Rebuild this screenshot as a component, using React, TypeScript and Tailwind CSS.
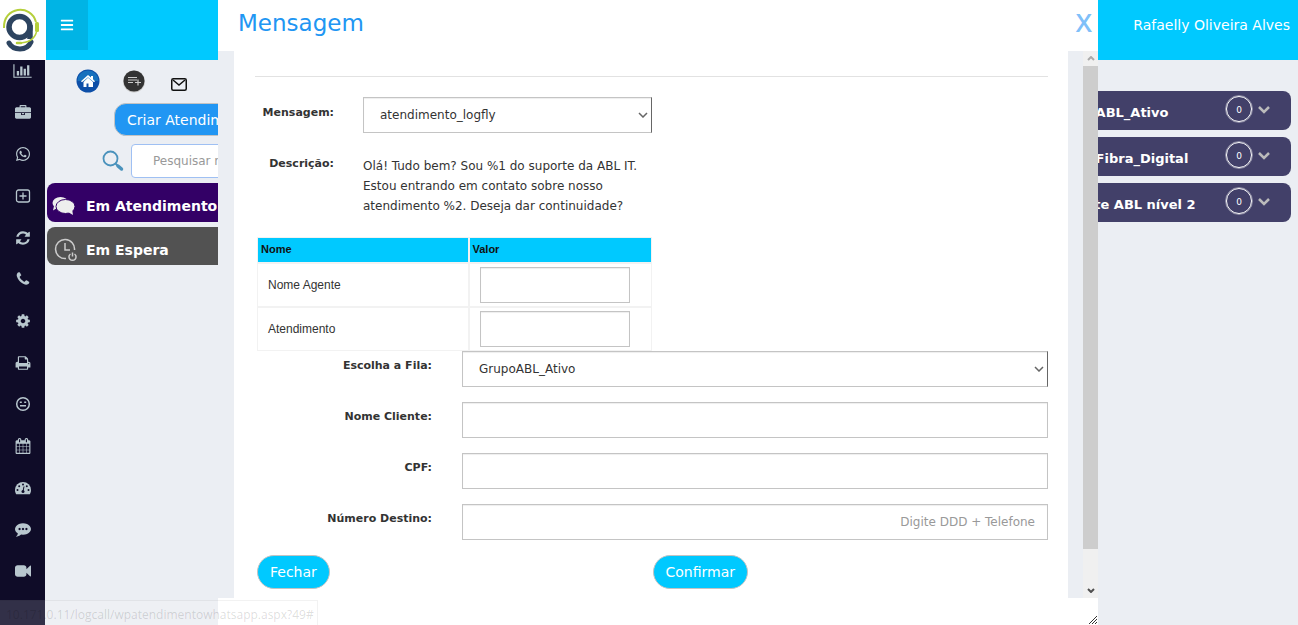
import type { ReactNode } from 'react';
import { FaBars, FaWhatsapp } from 'react-icons/fa';

const queues = ['GrupoABL_Ativo', 'GrupoFibra_Digital', 'Suporte ABL nível 2'];

const paths = {
  chart:
    'M640 896v512h-256v-512h256zm384-512v1024h-256v-1024h256zm1024 1152v128h-2048v-1536h128v1408h1920zm-640-896v768h-256v-768h256zm384-384v1152h-256v-1152h256z',
  briefcase:
    'M640 256h512v-128h-512v128zm1152 640v480q0 66-47 113t-113 47h-1472q-66 0-113-47t-47-113v-480h672v160q0 26 19 45t45 19h320q26 0 45-19t19-45v-160h672zm-768 0v128h-256v-128h256zm768-480v384h-1792v-384q0-66 47-113t113-47h352v-160q0-40 28-68t68-28h576q40 0 68 28t28 68v160h352q66 0 113 47t47 113z',
  refresh:
    'M1639 1056q0 5-1 7-64 268-268 434.5t-478 166.5q-146 0-282.5-55t-243.5-157l-129 129q-19 19-45 19t-45-19-19-45v-448q0-26 19-45t45-19h448q26 0 45 19t19 45-19 45l-137 137q71 66 161 102t187 36q134 0 250-65t186-179q11-17 53-117 8-23 30-23h192q13 0 22.5 9.5t9.5 22.5zm25-800v448q0 26-19 45t-45 19h-448q-26 0-45-19t-19-45 19-45l138-138q-148-137-349-137-134 0-250 65t-186 179q-11 17-53 117-8 23-30 23h-199q-13 0-22.5-9.5t-9.5-22.5v-7q65-268 270-434.5t480-166.5q146 0 284 55.5t245 156.5l130-129q19-19 45-19t45 19 19 45z',
  phone:
    'M1600 1240q0 27-10 70.5t-21 68.5q-21 50-122 106-94 51-186 51-27 0-53-3.5t-57.5-12.5-47-14.5-55.5-20.5-49-18q-98-35-175-83-127-79-264-216t-216-264q-48-77-83-175-3-9-18-49t-20.5-55.5-14.5-47-12.5-57.5-3.5-53q0-92 51-186 56-101 106-122 25-11 68.5-21t70.5-10q14 0 21 3 18 6 53 76 11 19 30 54t35 63.5 31 53.5q3 4 17.5 25t21.5 35.5 7 28.5q0 20-28.5 50t-62 55-62 53-28.5 46q0 9 5 22.5t8.5 20.5 14 24 11.5 19q76 137 174 235t235 174q2 1 19 11.5t24 14 20.5 8.5 22.5 5q18 0 46-28.5t53-62 55-62 50-28.5q14 0 28.5 7t35.5 21.5 25 17.5q25 15 53.5 31t63.5 35 54 30q70 35 76 53 3 7 3 21z',
  cog: 'M1152 896q0-106-75-181t-181-75-181 75-75 181 75 181 181 75 181-75 75-181zm512-109v222q0 12-8 23t-20 13l-185 28q-19 54-39 91 35 50 107 138 10 12 10 25t-9 23q-27 37-99 108t-94 71q-12 0-26-9l-138-108q-44 23-91 38-16 136-29 186-7 28-36 28h-222q-14 0-24.5-8.5t-11.5-21.5l-28-184q-49-16-90-37l-141 107q-10 9-25 9-14 0-25-11-126-114-165-168-7-10-7-23 0-12 8-23 15-21 51-66.5t54-70.5q-27-50-41-99l-183-27q-13-2-21-12.5t-8-23.5v-222q0-12 8-23t19-13l186-28q14-46 39-92-40-57-107-138-10-12-10-24 0-10 9-23 26-36 98.5-107.5t94.5-71.5q13 0 26 10l138 107q44-23 91-38 16-136 29-186 7-28 36-28h222q14 0 24.5 8.5t11.5 21.5l28 184q49 16 90 37l142-107q9-9 24-9 13 0 25 10 129 119 165 170 7 8 7 22 0 12-8 23-15 21-51 66.5t-54 70.5q26 50 41 98l183 28q13 2 21 12.5t8 23.5z',
  print:
    'M448 1536h896v-256h-896v256zm0-640h896v-384h-160q-40 0-68-28t-28-68v-160h-640v640zm1152 64q0-26-19-45t-45-19-45 19-19 45 19 45 45 19 45-19 19-45zm128 0v416q0 13-9.5 22.5t-22.5 9.5h-224v160q0 40-28 68t-68 28h-960q-40 0-68-28t-28-68v-160h-224q-13 0-22.5-9.5t-9.5-22.5v-416q0-79 56.5-135.5t135.5-56.5h64v-544q0-40 28-68t68-28h672q40 0 88 20t76 48l152 152q28 28 48 76t20 88v256h64q79 0 135.5 56.5t56.5 135.5z',
  calendar:
    'M192 1664h288v-288h-288v288zm352 0h320v-288h-320v288zm-352-352h288v-320h-288v320zm352 0h320v-320h-320v320zm-352-384h288v-288h-288v288zm736 736h320v-288h-320v288zm-384-736h320v-288h-320v288zm768 736h288v-288h-288v288zm-384-352h320v-320h-320v320zm-352-864v-288q0-13-9.5-22.5t-22.5-9.5h-64q-13 0-22.5 9.5t-9.5 22.5v288q0 13 9.5 22.5t22.5 9.5h64q13 0 22.5-9.5t9.5-22.5zm736 864h288v-320h-288v320zm-384-384h320v-288h-320v288zm384 0h288v-288h-288v288zm32-480v-288q0-13-9.5-22.5t-22.5-9.5h-64q-13 0-22.5 9.5t-9.5 22.5v288q0 13 9.5 22.5t22.5 9.5h64q13 0 22.5-9.5t9.5-22.5zm384-64v1280q0 52-38 90t-90 38h-1408q-52 0-90-38t-38-90v-1280q0-52 38-90t90-38h128v-96q0-66 47-113t113-47h64q66 0 113 47t47 113v96h384v-96q0-66 47-113t113-47h64q66 0 113 47t47 113v96h128q52 0 90 38t38 90z',
  comment:
    'M640 896q0-53-37.5-90.5t-90.5-37.5-90.5 37.5-37.5 90.5 37.5 90.5 90.5 37.5 90.5-37.5 37.5-90.5zm384 0q0-53-37.5-90.5t-90.5-37.5-90.5 37.5-37.5 90.5 37.5 90.5 90.5 37.5 90.5-37.5 37.5-90.5zm384 0q0-53-37.5-90.5t-90.5-37.5-90.5 37.5-37.5 90.5 37.5 90.5 90.5 37.5 90.5-37.5 37.5-90.5zm384 0q0 174-120 321.5t-326 233-450 85.5q-110 0-211-18-173 173-435 229-52 10-86 13-12 1-22-6t-13-18q-4-15 20-37 5-5 23.5-21.5t25.5-23.5 23.5-25.5 24-31.5 20.5-37 20-48 14.5-57.5 12.5-72.5q-146-90-229.5-216.5t-83.5-269.5q0-174 120-321.5t326-233 450-85.5 450 85.5 326 233 120 321.5z',
  video:
    'M1792 352v1088q0 42-39 59-13 5-25 5-27 0-45-19l-403-403v166q0 119-84.5 203.5t-203.5 84.5h-704q-119 0-203.5-84.5t-84.5-203.5v-704q0-119 84.5-203.5t203.5-84.5h704q119 0 203.5 84.5t84.5 203.5v165l403-402q18-19 45-19 12 0 25 5 39 17 39 59z',
};

function Glyph({ d }: { d: string }) {
  return (
    <svg viewBox="0 0 1792 1792" className="size-4" fill="currentColor">
      <path d={d} />
    </svg>
  );
}

const menu: { label: string; icon: ReactNode }[] = [
  {
    label: 'Relatórios',
    icon: (
      <svg viewBox="0 0 2048 1792" className="h-4 w-[19px]" fill="currentColor">
        <path d={paths.chart} />
      </svg>
    ),
  },
  { label: 'Negócios', icon: <Glyph d={paths.briefcase} /> },
  { label: 'WhatsApp', icon: <FaWhatsapp className="size-4" /> },
  {
    label: 'Adicionar',
    icon: (
      <svg viewBox="0 0 16 16" className="size-4" fill="none" stroke="currentColor" strokeWidth="1.300">
        <rect x="1.500" y="2" width="13" height="12" rx="2" />
        <path d="M8 4.500v7M4.500 8h7" />
      </svg>
    ),
  },
  { label: 'Atualizar', icon: <Glyph d={paths.refresh} /> },
  { label: 'Telefone', icon: <Glyph d={paths.phone} /> },
  { label: 'Configurações', icon: <Glyph d={paths.cog} /> },
  { label: 'Imprimir', icon: <Glyph d={paths.print} /> },
  {
    label: 'Pausas',
    icon: (
      <svg viewBox="0 0 16 16" className="size-4" fill="none" stroke="currentColor" strokeWidth="1.500">
        <circle cx="8" cy="8" r="6.300" />
        <path d="M4.800 6.200h2M9.200 6.200h2M5 9.800h6" />
      </svg>
    ),
  },
  { label: 'Agenda', icon: <Glyph d={paths.calendar} /> },
  {
    label: 'Painel',
    icon: (
      <svg viewBox="0 0 18 16" className="h-4 w-[18px]">
        <path d="M1 10a8 8 0 0 1 16 0c0 1.800-.5 3-1.200 4.200H2.200C1.500 13 1 11.800 1 10z" fill="currentColor" />
        <g fill="#0f0c28">
          <circle cx="3.500" cy="10" r="1" />
          <circle cx="5.200" cy="6.200" r="1" />
          <circle cx="9" cy="4.500" r="1" />
          <circle cx="12.800" cy="6.200" r="1" />
          <circle cx="14.500" cy="10" r="1" />
          <circle cx="9" cy="11.500" r="1.500" />
        </g>
        <path d="M9 11.500l1-5" stroke="#0f0c28" strokeWidth="1" />
      </svg>
    ),
  },
  { label: 'Mensagens', icon: <Glyph d={paths.comment} /> },
  { label: 'Vídeo', icon: <Glyph d={paths.video} /> },
];

function Logo() {
  return (
    <svg viewBox="0 0 46 60" className="h-[60px] w-[46px] bg-white">
      <g fill="none">
        <circle cx="19.500" cy="27" r="10.500" stroke="#2d4460" strokeWidth="5.500" />
        <path d="M30 25v14" stroke="#2d4460" strokeWidth="5.500" />
        <path d="M9 43c4 7.500 18 8.500 22-1" stroke="#2d4460" strokeWidth="5" strokeLinecap="round" />
        <path d="M4 28C3 6.500 31 3.500 36 22" stroke="#b5cf3b" strokeWidth="2" />
        <path d="M36.500 32c-2 7-8 11-18 11" stroke="#b5cf3b" strokeWidth="1.500" />
        <path d="M17 43h4" stroke="#b5cf3b" strokeWidth="2.500" strokeLinecap="round" />
      </g>
      <rect x="35" y="22" width="4" height="10" rx="1.500" fill="#b5cf3b" />
    </svg>
  );
}

function Sidebar() {
  return (
    <aside className="flex w-[46px] shrink-0 flex-col">
      <Logo />
      <nav className="flex w-[45px] flex-1 flex-col items-center justify-between bg-[#0f0c28] pt-[3px] pb-[46px] text-[#b8c7ce]">
        {menu.map((item) => (
          <a key={item.label} href="#" aria-label={item.label}>
            {item.icon}
          </a>
        ))}
      </nav>
    </aside>
  );
}

function AgentPanel() {
  return (
    <section className="w-[230px] pt-[9px] pl-px">
      <div className="flex items-center pl-[29px]">
        <button aria-label="Início">
          <svg viewBox="0 0 24 24" className="size-6">
            <circle cx="12" cy="12" r="11.500" fill="#0d4fa8" />
            <path d="M1.500 12a10.500 10.500 0 0 1 21 0z" fill="#1670bd" />
            <path d="M12 6L5 12.200l1 1L12 8.200l6 5 1-1L17 10.300V7h-2v1.500zM7.500 13v5h3v-3.500h2V18H17v-5l-5-4.200z" fill="#fff" />
          </svg>
        </button>
        <button aria-label="Nova lista" className="ml-[22px]">
          <svg viewBox="0 0 24 24" className="size-6">
            <circle cx="12" cy="12.500" r="11" fill="#c9c9c9" />
            <circle cx="12" cy="12" r="10.500" fill="#333" />
            <path d="M6 8.500h9M6 11h9M6 13.500h5M16 10.500v6M13 13.500h6" stroke="#ccc" strokeWidth="1.200" />
          </svg>
        </button>
        <button aria-label="E-mail" className="mt-[6px] ml-[25px]">
          <svg viewBox="0 0 16 13" className="h-[13px] w-4" fill="none" stroke="#111" strokeWidth="1.500">
            <rect x=".75" y=".75" width="14.500" height="11.500" rx="1.500" />
            <path d="M2 2l6 5 6-5" />
          </svg>
        </button>
      </div>
      <button className="mt-[10px] ml-[67px] h-[33px] w-[160px] rounded-xl border border-[#c3c3c3] bg-[#2196f3] px-3 text-left text-sm whitespace-nowrap text-white">
        Criar Atendimento
      </button>
      <div className="mt-2 flex items-center pl-[55px]">
        <svg viewBox="0 0 22 22" className="size-[22px]" fill="none">
          <circle cx="8.500" cy="8.500" r="7" stroke="#4a92bc" strokeWidth="1.800" />
          <path d="M13.500 13.500l2.500 2.500" stroke="#4a92bc" strokeWidth="2" />
          <path d="M16 16l3.500 3" stroke="#4a92bc" strokeWidth="3.500" strokeLinecap="round" />
        </svg>
        <input
          aria-label="Pesquisar"
          placeholder="Pesquisar na lista"
          className="ml-[7px] h-[34px] w-[140px] rounded-sm border border-[#9fc0f3] bg-white px-[21px] text-xs placeholder:text-[#999]"
        />
      </div>
      <button className="mt-[5px] flex h-[39px] w-full items-center rounded-lg bg-[#330066] pl-[5px] text-sm font-bold text-white">
        <svg viewBox="0 0 24 20" className="mt-[6px] h-5 w-6" fill="#eee">
          <ellipse cx="8.500" cy="7" rx="8" ry="6" />
          <path d="M2 10L1 14.500l5-3z" />
          <ellipse cx="13.500" cy="10.500" rx="9.500" ry="7" stroke="#330066" />
          <path d="M16 16l5 3-1-6z" />
        </svg>
        <span className="mt-[6px] ml-[10px] whitespace-nowrap">Em Atendimento</span>
      </button>
      <button className="mt-[5px] flex h-[38px] w-full items-center rounded-lg bg-[#525252] pl-[7px] text-sm font-bold text-white">
        <svg viewBox="0 0 24 24" className="mt-2 size-6" fill="none" stroke="#ccc" strokeWidth="1.500">
          <path d="M12 20.500A9.500 9.500 0 1 1 20.500 12" />
          <path d="M11 5v7h5" />
          <path d="M16.500 16a3.500 3.500 0 1 0 4 0M18.500 14.500v4" />
        </svg>
        <span className="mt-2 ml-2 whitespace-nowrap">Em Espera</span>
      </button>
    </section>
  );
}

function QueuePanel() {
  return (
    <section className="flex w-[260px] flex-col gap-[7px] pt-[31px] pr-[7px]">
      {queues.map((name) => (
        <button key={name} className="flex h-[39px] items-center rounded-lg bg-[#424069] pr-[21px] pl-[13px] text-white">
          <span className="mt-1 flex-1 text-left text-[13px] font-bold whitespace-nowrap">{name}</span>
          <span className="mb-1 flex size-[26px] items-center justify-center rounded-full border border-white pt-[2px] text-[9px] leading-3 outline outline-white/40">
            0
          </span>
          <svg viewBox="0 0 12 8" className="mb-[2px] ml-[6px] h-2 w-3" fill="none" stroke="#bbb" strokeWidth="2.500">
            <path d="M1 1l5 5 5-5" />
          </svg>
        </button>
      ))}
    </section>
  );
}

function SelectBox({ id, value }: { id: string; value: string }) {
  return (
    <div className="relative">
      <select
        id={id}
        className="block h-9 w-full appearance-none border border-[#c4c4c4] border-r-[#666] bg-white pr-6 pl-4 text-xs text-[#333] shadow-[inset_0_1px_1px_#eee]"
      >
        <option>{value}</option>
      </select>
      <svg viewBox="0 0 10 6" className="pointer-events-none absolute top-[15px] right-1 h-[6px] w-[10px]" fill="none" stroke="#666" strokeWidth="1.500">
        <path d="M1 1l4 4 4-4" />
      </svg>
    </div>
  );
}

function Field({ id, label, children }: { id: string; label: string; children: ReactNode }) {
  return (
    <div className="flex">
      <label htmlFor={id} className="w-[198px] shrink-0 pt-[5px] pr-[21px] text-right text-[11px] leading-5 font-bold">
        {label}
      </label>
      <div className="ml-[9px] flex-1">{children}</div>
    </div>
  );
}

const inputStyle = 'block h-9 w-full border border-[#c4c4c4] bg-white px-3 text-xs shadow-[inset_0_1px_1px_#eee] placeholder:text-[#999]';

function MessageForm() {
  return (
    <form className="flex-1 bg-white pt-[25px] pr-[20px] pb-[9px] pl-[21px] text-[#333]">
      <hr className="border-[#e2e2e2]" />
      <div className="mt-5 flex">
        <label htmlFor="mensagem" className="w-[79px] shrink-0 pt-[6px] text-right text-[11px] leading-5 font-bold">
          Mensagem:
        </label>
        <div className="ml-[29px] w-[289px]">
          <SelectBox id="mensagem" value="atendimento_logfly" />
        </div>
      </div>
      <div className="mt-[21px] flex">
        <span className="w-[79px] shrink-0 text-right text-[11px] leading-5 font-bold">Descrição:</span>
        <p className="ml-[29px] w-[289px] pt-[2px] text-xs leading-5">
          Olá! Tudo bem? Sou %1 do suporte da ABL IT. Estou entrando em contato sobre nosso atendimento %2. Deseja dar continuidade?
        </p>
      </div>

      <table className="mt-[21px] ml-[2px] w-[395px] border-collapse font-['Liberation_Sans',Arial,sans-serif] text-xs">
        <thead>
          <tr className="h-[25px] bg-[#00c9ff] text-left text-[11px] text-[#111]">
            <th className="w-[211px] border border-r-2 border-b-2 border-[#f2f2f2] px-[3px]">Nome</th>
            <th className="border border-b-2 border-[#f2f2f2] px-[3px]">Valor</th>
          </tr>
        </thead>
        <tbody>
          {['Nome Agente', 'Atendimento'].map((name) => (
            <tr key={name} className="h-[44px]">
              <td className="border border-t-2 border-r-2 border-[#f2f2f2] px-[10px]">
                <label htmlFor={name}>{name}</label>
              </td>
              <td className="border border-t-2 border-[#f2f2f2] px-[10px]">
                <input id={name} className="block h-9 w-[150px] border border-[#c4c4c4] px-2 shadow-[inset_0_1px_1px_#eee]" />
              </td>
            </tr>
          ))}
        </tbody>
      </table>

      <div className="flex flex-col gap-[15px]">
        <Field id="fila" label="Escolha a Fila:">
          <SelectBox id="fila" value="GrupoABL_Ativo" />
        </Field>
        <Field id="cliente" label="Nome Cliente:">
          <input id="cliente" className={inputStyle} />
        </Field>
        <Field id="cpf" label="CPF:">
          <input id="cpf" className={inputStyle} />
        </Field>
        <Field id="numero" label="Número Destino:">
          <input id="numero" placeholder="Digite DDD + Telefone" className={`${inputStyle} text-right`} />
        </Field>
      </div>

      <div className="mt-[15px] grid grid-cols-2 pl-[2px] text-sm text-white">
        <div>
          <button type="button" className="h-[34px] rounded-full border border-[#c3c3c3] bg-[#00c9ff] px-3">
            Fechar
          </button>
        </div>
        <div>
          <button type="button" className="h-[34px] rounded-full border border-[#c3c3c3] bg-[#00c9ff] px-3">
            Confirmar
          </button>
        </div>
      </div>
    </form>
  );
}

function ScrollRail() {
  return (
    <div className="flex w-[15px] shrink-0 flex-col bg-[#f0f0f0]">
      <div className="flex h-[15px] items-center justify-center">
        <svg viewBox="0 0 8 5" className="h-[5px] w-2" fill="none" stroke="#aaa" strokeWidth="2">
          <path d="M1 4l3-3 3 3" />
        </svg>
      </div>
      <div className="flex-[483] bg-[#cdcdcd]" />
      <div className="flex-[34]" />
      <div className="flex h-[15px] items-center justify-center">
        <svg viewBox="0 0 8 5" className="h-[5px] w-2" fill="none" stroke="#505050" strokeWidth="2">
          <path d="M1 1l3 3 3-3" />
        </svg>
      </div>
    </div>
  );
}

function MessageDialog() {
  return (
    <div role="dialog" aria-label="Mensagem" className="absolute inset-y-0 right-[200px] left-[218px] flex flex-col bg-white">
      <header className="flex h-[51px] shrink-0 items-center justify-between pr-[6px] pb-1 pl-5">
        <h2 className="text-[23px] text-[#2196f3]">Mensagem</h2>
        <button aria-label="Fechar janela" className="pb-[3px] font-['Open_Sans',sans-serif] text-[26px] font-semibold text-[#7fc0f9]">
          X
        </button>
      </header>
      <div className="flex flex-1 bg-[#ebeef3] pl-4">
        <MessageForm />
        <div className="w-[15px] shrink-0" />
        <ScrollRail />
      </div>
      <footer className="flex h-[27px] shrink-0 items-end justify-end pr-px pb-px">
        <svg viewBox="0 0 8 8" className="size-2" stroke="#333" strokeWidth="1">
          <path d="M0 8l8-8M3 8l5-5M6 8l2-2" />
        </svg>
      </footer>
    </div>
  );
}

export default function App() {
  return (
    <div className="relative flex min-h-screen overflow-hidden bg-[#ebeef3] font-['DejaVu_Sans',Verdana,sans-serif]">
      <Sidebar />
      <div className="flex flex-1 flex-col">
        <header className="flex h-[60px] items-start justify-between bg-[#00c9ff] pr-[8px] text-white">
          <button aria-label="Abrir menu" className="flex h-[50px] w-[42px] items-center justify-center bg-[#00b4e5]">
            <FaBars className="size-[14px]" />
          </button>
          <span className="pt-[15px] text-sm">Rafaelly Oliveira Alves</span>
        </header>
        <main className="flex flex-1 items-start justify-between">
          <AgentPanel />
          <QueuePanel />
        </main>
      </div>
      <MessageDialog />
      <div className="absolute bottom-0 left-0 h-[25px] w-[318px] border-t border-r border-black/5 bg-white/15 pt-[6px] pl-[6px] font-['Open_Sans',sans-serif] text-xs leading-4 text-black/15">
        10.171.0.11/logcall/wpatendimentowhatsapp.aspx?49#
      </div>
    </div>
  );
}
